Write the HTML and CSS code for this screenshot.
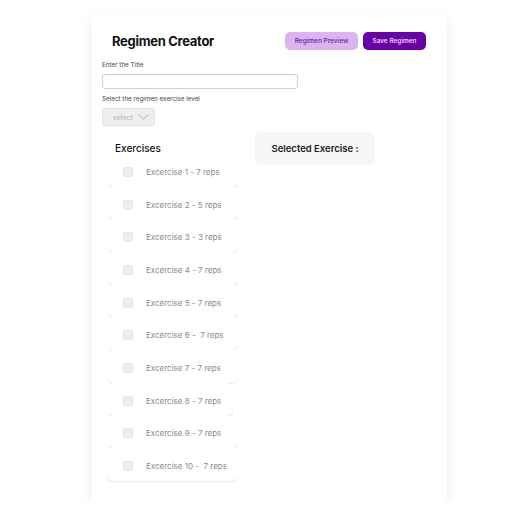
FILE: index.html
```html
<!DOCTYPE html>
<html>
<head>
<meta charset="utf-8">
<link rel="stylesheet" href="styles.css">
</head>
<body>
<div class="card">
  <div class="header">
    <h1 class="title">Regimen Creator</h1>
    <div class="actions">
      <button class="btn btn-light">Regimen Preview</button>
      <button class="btn btn-dark">Save Regimen</button>
    </div>
  </div>
  <div class="form">
    <label class="label">Enter the Title</label>
    <input class="input" type="text">
    <label class="label label-2">Select the regimen exercise level</label>
    <div class="select">
      <span>select</span>
      <svg width="11" height="6" viewBox="0 0 11 6"><path d="M0.5 0.5 L5.5 5.2 L10.5 0.5" fill="none" stroke="#a8a8a8" stroke-width="1"/></svg>
    </div>
  </div>
  <div class="columns">
    <div class="list">
      <div class="list-head">Exercises</div>
      <div class="row"><span class="check"></span><span class="name">Excercise 1 - 7 reps</span></div>
      <div class="row"><span class="check"></span><span class="name">Excercise 2 - 5 reps</span></div>
      <div class="row"><span class="check"></span><span class="name">Excercise 3 - 3 reps</span></div>
      <div class="row"><span class="check"></span><span class="name">Excercise 4 - 7 reps</span></div>
      <div class="row"><span class="check"></span><span class="name">Excercise 5 - 7 reps</span></div>
      <div class="row"><span class="check"></span><span class="name">Excercise 6 -&nbsp; 7 reps</span></div>
      <div class="row"><span class="check"></span><span class="name">Excercise 7 - 7 reps</span></div>
      <div class="row row-narrow"><span class="check"></span><span class="name">Excercise 8 - 7 reps</span></div>
      <div class="row"><span class="check"></span><span class="name">Excercise 9 - 7 reps</span></div>
      <div class="row"><span class="check"></span><span class="name">Excercise 10 -&nbsp; 7 reps</span></div>
    </div>
    <div class="selected">Selected Exercise :</div>
  </div>
</div>
</body>
</html>
```
FILE: styles.css
```css
* { box-sizing: border-box; }
body {
  margin: 0;
  background: #ffffff;
  font-family: Inter, "Noto Sans", sans-serif;
  color: #222;
}
.card {
  margin: 15px 0 0 92px;
  width: 355px;
  height: 487px;
  background: #fff;
  border-radius: 5px;
  box-shadow: 0 3px 14px rgba(0,0,0,0.08);
  padding: 17px 21px 0 10px;
}
.header {
  display: flex;
  justify-content: space-between;
  align-items: center;
  height: 18px;
  padding-left: 10px;
}
.title {
  margin: 0;
  font-size: 13px;
  font-weight: 700;
  letter-spacing: -0.3px;
  line-height: 18px;
  color: #111;
}
.actions { display: flex; gap: 5px; }
.btn {
  height: 18px;
  border: none;
  border-radius: 5px;
  font-family: Inter, sans-serif;
  font-size: 6.5px;
  font-weight: 500;
  padding: 0;
}
.btn-light { width: 73px; background: #dbb4f1; color: #6a16a8; }
.btn-dark { width: 63px; background: #6800a6; color: #f0e4fa; }
.form {
  display: flex;
  flex-direction: column;
  align-items: flex-start;
  padding-top: 11px;
}
.label {
  font-size: 6.3px;
  line-height: 8px;
  color: #444;
}
.input {
  margin-top: 5px;
  width: 196px;
  height: 15px;
  border: 1px solid #cfcfcf;
  border-radius: 3px;
  background: #fff;
}
.label-2 { margin-top: 6px; }
.select {
  margin-top: 5px;
  width: 53px;
  height: 18px;
  border: 1px solid #e2e2e2;
  border-radius: 3px;
  background: #efefef;
  display: flex;
  align-items: center;
  gap: 5px;
  padding-left: 10px;
  font-size: 7px;
  color: #b5b5b5;
}
.columns {
  display: flex;
  align-items: flex-start;
  padding-left: 6px;
  margin-top: 6px;
}
.list { width: 130px; }
.list-head {
  padding: 9px 0 0 7px;
  height: 22px;
  font-size: 10px;
  line-height: 14px;
  font-weight: 500;
  color: #111;
}
.row {
  height: 32.7px;
  display: flex;
  align-items: center;
  padding: 3px 0 0 15px;
  gap: 13px;
  border-radius: 6px;
  background: #fff;
  box-shadow: 0 1.5px 1px -0.8px rgba(0,0,0,0.09);
}
.row-narrow { width: 125px; }
.check {
  width: 10px;
  height: 10px;
  border-radius: 2px;
  background: #efefef;
  border: 1px solid #e4e4e4;
  flex: none;
}
.name {
  font-size: 8px;
  color: #8a8a8a;
  white-space: pre;
}
.selected {
  margin-left: 17px;
  width: 120px;
  height: 33px;
  border-radius: 6px;
  background: #f6f6f6;
  display: flex;
  align-items: center;
  justify-content: center;
  font-size: 9.5px;
  font-weight: 600;
  color: #222;
}
```
